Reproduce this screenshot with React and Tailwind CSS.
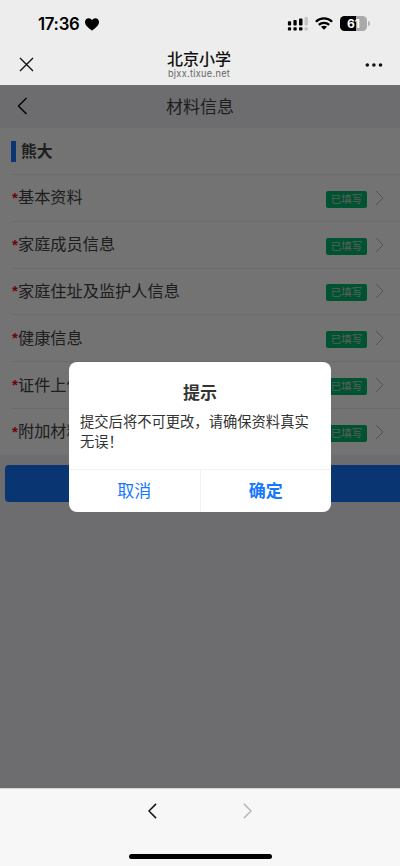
import { useState } from 'react';

const rows = ['基本资料', '家庭成员信息', '家庭住址及监护人信息', '健康信息', '证件上传', '附加材料'];

const Chevron = ({ left = false, className = '' }) => (
    <svg viewBox="0 0 10 18" fill="none" stroke="currentColor" className={className}>
        <path d={left ? 'M9 1L1 9l8 8' : 'M1 1l8 8-8 8'} vectorEffect="non-scaling-stroke" />
    </svg>
);

const StatusBar = () => (
    <div className="flex h-[47px] items-center justify-between pl-[38px] pr-[30px]">
        <div className="flex items-center gap-[6px] pt-px">
            <span className="font-['Inter'] text-[16.8px] font-semibold leading-5 tracking-[-0.3px] text-black">17:36</span>
            <svg width="14" height="13" viewBox="0 0 14 13" fill="#000">
                <path d="M7 12.8C5.6 11.4 0 8.2 0 4.1 0 1.8 1.6.2 3.7.2 5.1.2 6.4 1 7 2.2 7.6 1 8.9.2 10.3.2 12.4.2 14 1.8 14 4.1c0 4.1-5.6 7.3-7 8.7z" />
            </svg>
        </div>
        <div className="flex items-center">
            <svg width="21" height="14" viewBox="0 0 21 14" className="mr-[7px]">
                <rect x="0.9" y="4.2" width="3.2" height="4.3" rx=".8" />
                <rect x="6.4" y="3" width="3.3" height="5.5" rx=".8" />
                <rect x="12" y="1.6" width="3.5" height="6.9" rx=".8" />
                <rect x="0.9" y="10.2" width="3.2" height="3.4" rx=".8" />
                <rect x="6.4" y="10.2" width="3.3" height="3.4" rx=".8" />
                <rect x="12" y="10.2" width="3.5" height="3.4" rx=".8" />
                <rect x="17.5" y="0" width="3.4" height="8.5" rx=".8" fill="#c6c6c6" />
                <rect x="17.5" y="10.2" width="3.4" height="3.4" rx=".8" fill="#c6c6c6" />
            </svg>
            <svg width="18" height="13" viewBox="0 0 18 13" fill="none" stroke="#000" strokeWidth="2.3" className="mr-[7px]">
                <path d="M.9 4.8c4.5-4.5 11.7-4.5 16.2 0M3.8 7.9c2.9-2.8 7.5-2.8 10.4 0" />
                <path d="M9 12.8L5.9 9.8c1.7-1.5 4.5-1.5 6.2 0z" fill="#000" stroke="none" />
            </svg>
            <div className="flex h-[15px] w-[27px] items-center justify-center rounded-[4.5px] bg-[linear-gradient(90deg,#000_61%,#a9a9a9_61%)]">
                <span className="font-['Inter'] text-[12px] font-bold leading-[15px] text-white">61</span>
            </div>
            <div className="ml-px h-[5px] w-[2px] rounded-r-full bg-[#b4b4b4]" />
        </div>
    </div>
);

const BrowserBar = () => (
    <div className="flex h-[38px] items-start justify-between pl-[19px] pr-[17px]">
        <svg width="15" height="15" viewBox="0 0 15 15" fill="none" stroke="#111" strokeWidth="1.4" className="mt-[10px]">
            <path d="M1 1l13 13M14 1L1 14" />
        </svg>
        <div className="flex flex-col items-center pr-px">
            <span className="mt-[3px] text-[16px] font-medium leading-[18px] text-[#111]">北京小学</span>
            <span className="font-['Inter','Liberation_Sans'] text-[9.2px] leading-[11px] tracking-[0.3px] text-[#666]">bjxx.tixue.net</span>
        </div>
        <svg width="18" height="4" viewBox="0 0 18 4" fill="#111" className="mt-[15.5px]">
            <circle cx="2.3" cy="2" r="1.8" />
            <circle cx="8.9" cy="2" r="1.8" />
            <circle cx="15.5" cy="2" r="1.8" />
        </svg>
    </div>
);

const FormRow = ({ label }) => (
    <div className="ml-3 flex h-[46.8px] items-center border-t border-[#ededed] pr-[15px]">
        <span className="w-[6px] text-[15px] font-bold leading-6 text-[#ee0a24] font-['Liberation_Sans']">*</span>
        <span className="mb-px flex-1 whitespace-nowrap text-[16.2px] leading-6 text-[#444]">{label}</span>
        <span className="mt-[3px] flex h-[17px] w-[41px] items-center justify-center rounded-[2px] bg-[#00b96b] pt-px text-[10.5px] leading-4 text-[#ccc]">已填写</span>
        <Chevron className="ml-[8px] mr-px h-4 w-[9px] text-[#b8b8b8]" />
    </div>
);

const ConfirmDialog = ({ onClose }) => (
    <div className="absolute inset-0 bg-black/55">
        <div className="mx-auto mt-[276.6px] flex h-[150px] w-[262px] flex-col overflow-hidden rounded-[8px] bg-white">
            <h2 className="mt-5 text-center text-[17px] font-bold leading-[22px] text-[#333]">提示</h2>
            <p className="mt-[8px] flex-1 px-[11px] text-[14.3px] leading-[20px] text-[#333]">提交后将不可更改，请确保资料真实无误！</p>
            <div className="flex h-[42.6px] border-t border-[#f3f3f3] text-[17px] text-[#1677ff]">
                <button onClick={onClose} className="flex-1 border-r border-[#f3f3f3] pt-px">取消</button>
                <button onClick={onClose} className="flex-1 pt-px font-bold">确定</button>
            </div>
        </div>
    </div>
);

export default function App() {
    const [open, setOpen] = useState(true);

    return (
        <div className="flex h-[866px] w-[400px] flex-col overflow-hidden bg-[#ededed] font-['Inter','Noto_Sans_CJK_SC',sans-serif]">
            <StatusBar />
            <BrowserBar />

            {/* Page content under the dialog mask */}
            <main className="relative flex-1 overflow-hidden bg-[#f2f2f7]">
                <header className="flex h-[43px] items-center">
                    <Chevron left className="-mt-px ml-[17px] h-[18px] w-[11px] stroke-[1.4] text-black" />
                    <h1 className="flex-1 pr-[28px] text-center text-[17px] leading-6 text-[#444]">材料信息</h1>
                </header>

                <section className="bg-white">
                    <div className="flex h-[46px] items-center pl-[11px]">
                        <span className="h-[21px] w-[5px] bg-[#1677ff]" />
                        <span className="ml-[5px] mt-px text-[15.8px] font-bold leading-6 text-[#444]">熊大</span>
                    </div>
                    {rows.map((label) => (
                        <FormRow key={label} label={label} />
                    ))}
                </section>

                <button onClick={() => setOpen(true)} className="ml-[5px] mt-[10px] block h-[37px] w-full rounded-[4px] bg-[#1677ff]" />

                {open && <ConfirmDialog onClose={() => setOpen(false)} />}
            </main>

            <footer className="flex h-[78px] flex-col items-center justify-between border-t border-[#d4d4d4] bg-[#f7f7f7] pb-[7px] pt-[14px]">
                <div className="flex gap-[86px]">
                    <Chevron left className="h-4 w-[9px] stroke-[1.5] text-[#111]" />
                    <Chevron className="h-4 w-[9px] stroke-[1.5] text-[#b8b8b8]" />
                </div>
                <div className="h-[5px] w-[143px] rounded-full bg-black" />
            </footer>
        </div>
    );
}
